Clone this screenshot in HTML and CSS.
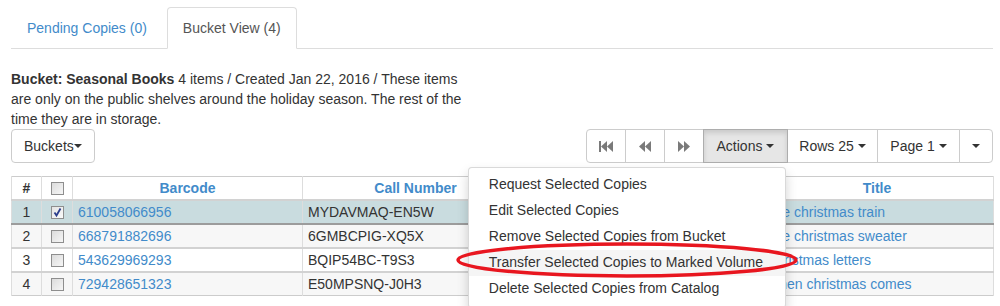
FILE: index.html
```html
<!DOCTYPE html>
<html>
<head>
<meta charset="utf-8">
<link rel="stylesheet" href="styles.css">
</head>
<body>
<div class="page">
  <ul class="tabs">
    <li class="tab"><a>Pending Copies (0)</a></li>
    <li class="tab active"><a>Bucket View (4)</a></li>
  </ul>

  <div class="desc">
    <b>Bucket: Seasonal Books</b> 4 items / Created Jan 22, 2016 / These items are only on the public shelves around the holiday season. The rest of the time they are in storage.
  </div>

  <div class="toolbar">
    <button class="btn">Buckets<span class="caret tight"></span></button>
    <div class="btn-group">
      <button class="btn icon-btn"><svg width="14" height="11" viewBox="0 0 14 11"><rect x="0" y="0" width="2" height="11" fill="#7a7a7a"/><polygon points="2,5.5 8,0 8,11" fill="#7a7a7a"/><polygon points="8,5.5 14,0 14,11" fill="#7a7a7a"/></svg></button>
      <button class="btn icon-btn"><svg width="12" height="11" viewBox="0 0 12 11"><polygon points="0,5.5 6,0 6,11" fill="#7a7a7a"/><polygon points="6,5.5 12,0 12,11" fill="#7a7a7a"/></svg></button>
      <button class="btn icon-btn"><svg width="12" height="11" viewBox="0 0 12 11"><polygon points="12,5.5 6,0 6,11" fill="#7a7a7a"/><polygon points="6,5.5 0,0 0,11" fill="#7a7a7a"/></svg></button>
      <div class="dd">
        <button class="btn active w-actions">Actions <span class="caret"></span></button>
        <ul class="menu">
          <li>Request Selected Copies</li>
          <li>Edit Selected Copies</li>
          <li>Remove Selected Copies from Bucket</li>
          <li class="hover">Transfer Selected Copies to Marked Volume</li>
          <li>Delete Selected Copies from Catalog</li>
        </ul>
      </div>
      <button class="btn w-rows">Rows 25 <span class="caret"></span></button>
      <button class="btn w-page">Page 1 <span class="caret"></span></button>
      <button class="btn last"><span class="caret tight"></span></button>
    </div>
  </div>

  <table class="grid">
    <colgroup>
      <col class="c-num"><col class="c-chk"><col class="c-bar"><col class="c-call"><col class="c-loc"><col class="c-title">
    </colgroup>
    <thead>
      <tr>
        <th class="center">#</th>
        <th class="center"><span class="cb"></span></th>
        <th class="link">Barcode</th>
        <th class="link">Call Number</th>
        <th class="link">Location</th>
        <th class="link">Title</th>
      </tr>
    </thead>
    <tbody>
      <tr class="selected">
        <td class="center">1</td>
        <td class="center"><span class="cb checked"><svg width="11" height="11" viewBox="0 0 11 11"><path d="M2.5 5.5 L4.5 8.5 L8.5 1.5" stroke="#2c3e8c" stroke-width="1.8" fill="none"/></svg></span></td>
        <td class="link">610058066956</td>
        <td>MYDAVMAQ-EN5W</td>
        <td>Main Stacks</td>
        <td class="link">The christmas train</td>
      </tr>
      <tr class="striped">
        <td class="center">2</td>
        <td class="center"><span class="cb"></span></td>
        <td class="link">668791882696</td>
        <td>6GMBCPIG-XQ5X</td>
        <td>Main Stacks</td>
        <td class="link">The christmas sweater</td>
      </tr>
      <tr>
        <td class="center">3</td>
        <td class="center"><span class="cb"></span></td>
        <td class="link">543629969293</td>
        <td>BQIP54BC-T9S3</td>
        <td>Main Stacks</td>
        <td class="link">Christmas letters</td>
      </tr>
      <tr class="striped">
        <td class="center">4</td>
        <td class="center"><span class="cb"></span></td>
        <td class="link">729428651323</td>
        <td>E50MPSNQ-J0H3</td>
        <td>Main Stacks</td>
        <td class="link">When christmas comes</td>
      </tr>
    </tbody>
  </table>

  <svg class="annot" width="350" height="42" viewBox="0 0 350 42"><ellipse cx="175" cy="21" rx="169" ry="16" fill="none" stroke="#e8161f" stroke-width="3.5"/></svg>
</div>
</body>
</html>
```

FILE: styles.css
```css
* { box-sizing: border-box; }
html, body { margin: 0; padding: 0; background: #fff; }
body {
  font-family: "Liberation Sans", Arial, sans-serif;
  font-size: 14px;
  line-height: 20px;
  color: #333;
}
.page {
  position: relative;
  padding: 7px 7px 0 11px;
  height: 306px;
  overflow: hidden;
}
.tabs {
  list-style: none;
  margin: 0;
  padding: 0;
  display: flex;
  border-bottom: 1px solid #ddd;
}
.tab { margin-right: 4px; margin-bottom: -1px; }
.tab a {
  display: block;
  padding: 10px 15px;
  border: 1px solid transparent;
  border-radius: 4px 4px 0 0;
  color: #428bca;
}
.tab.active a {
  color: #555;
  border-color: #ddd;
  border-bottom-color: #fff;
  background: #fff;
}
.desc {
  width: 470px;
  margin-top: 20px;
}
.toolbar {
  display: flex;
  justify-content: space-between;
  align-items: flex-start;
}
.btn {
  font-family: inherit;
  font-size: 14px;
  line-height: 20px;
  color: #333;
  background: #fff;
  border: 1px solid #ccc;
  border-radius: 4px;
  padding: 6px 12px;
  height: 34px;
  margin: 0;
  display: inline-flex;
  align-items: center;
  justify-content: center;
}
.caret {
  display: inline-block;
  width: 0; height: 0;
  margin-left: 4px;
  border-top: 4px solid #333;
  border-left: 4px solid transparent;
  border-right: 4px solid transparent;
}
.caret.tight { margin-left: 0; }
.btn-group { display: flex; }
.btn-group .btn, .btn-group .dd .btn { border-radius: 0; margin-left: -1px; }
.btn-group > .btn:first-child { border-radius: 4px 0 0 4px; margin-left: 0; }
.btn-group .btn.last { border-radius: 0 4px 4px 0; width: 34px; padding: 6px 0; }
.icon-btn { width: 40px; padding: 6px 0; }
.w-actions { width: 85px; padding: 6px 0; }
.w-rows { width: 91px; padding: 6px 0; }
.w-page { width: 83px; padding: 6px 0; }
.btn.active {
  background: #e6e6e6;
  border-color: #adadad;
  box-shadow: inset 0 3px 5px rgba(0,0,0,.125);
  position: relative;
  z-index: 2;
}
.dd { position: relative; display: flex; }
.menu {
  position: absolute;
  top: 38px;
  right: 2px;
  z-index: 10;
  list-style: none;
  margin: 0;
  padding: 4px 0 5px;
  background: #fff;
  border: 1px solid rgba(0,0,0,.15);
  border-radius: 4px;
  box-shadow: 0 6px 12px rgba(0,0,0,.175);
  white-space: nowrap;
}
.menu li {
  padding: 3px 22px 3px 20px;
  line-height: 19.9px;
  color: #333;
}
.menu li.hover { background: #f5f5f5; }
.grid {
  margin-top: 13px;
  border-collapse: collapse;
  table-layout: fixed;
  width: 982px;
  border: 1px solid #ccc;
}
.c-num { width: 30px; }
.c-chk { width: 31px; }
.c-bar { width: 230px; }
.c-call { width: 226px; }
.c-loc { width: 232px; }
.c-title { width: 233px; }
.grid th, .grid td {
  border-left: 1px solid #ddd;
  border-right: 1px solid #ddd;
  padding: 1px 5px;
  line-height: 20px;
  white-space: nowrap;
  overflow: hidden;
  text-align: left;
  font-weight: normal;
}
.grid th {
  font-weight: bold;
  text-align: center;
  padding: 1px 5px 1px;
  border-bottom: 1px solid #ddd;
}
.grid td { border-top: 2px solid #d2d2d2; }
.grid tr.selected td { background: #c9dcdf; border-bottom: 2px solid #9c9c9c; }
.grid tr.striped td { background: #f7f7f7; }
.grid .center { text-align: center; }
.grid .link { color: #428bca; }
.grid th.link { text-align: center; }
.cb {
  display: inline-block;
  width: 13px;
  height: 13px;
  border: 1px solid #8e8e8e;
  background: linear-gradient(135deg, #dcdcdc, #f6f6f6);
  vertical-align: -2px;
  position: relative;
}
.cb.checked { background: linear-gradient(135deg, #e4e4e4, #fafafa); }
.cb svg { position: absolute; left: 0; top: 0; }
.annot {
  position: absolute;
  left: 452px;
  top: 239px;
  z-index: 20;
}
```
